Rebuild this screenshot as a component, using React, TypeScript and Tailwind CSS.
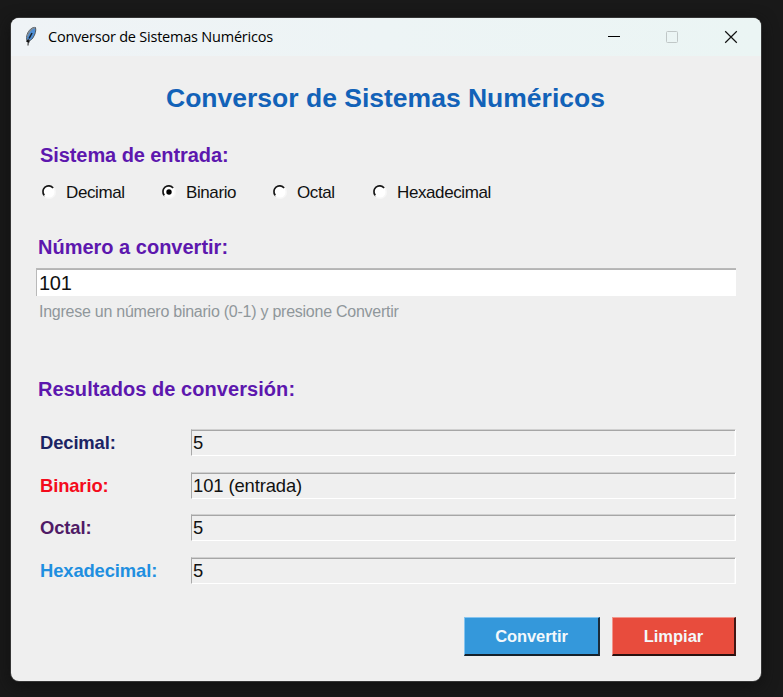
import { useState } from "react";

const systems = [
  { name: "Decimal", slot: "w-[120px]" },
  { name: "Binario", slot: "w-[111px]" },
  { name: "Octal", slot: "w-[100px]" },
  { name: "Hexadecimal", slot: "w-[120px]" },
];

const results = [
  { label: "Decimal:", value: "5", color: "text-[#1b2464]" },
  { label: "Binario:", value: "101 (entrada)", color: "text-[#f40b1c]" },
  { label: "Octal:", value: "5", color: "text-[#4f1b66]" },
  { label: "Hexadecimal:", value: "5", color: "text-[#1f8fe0]" },
];

function Feather() {
  return (
    <svg width="14" height="22" viewBox="0 0 14 22" className="block">
      <path d="M3 14.500C1.800 10.500 3.500 6 6.500 3.200C8.300 1.700 10 1.200 11.500 1.500C12.300 4.500 11.300 8.500 8.800 12C7.300 14 5.500 15.500 3 14.500Z" fill="#4f8fd6" stroke="#50565c" strokeWidth="1" />
      <path d="M11 1.600C7.500 2.600 4.500 6 3.300 10.500" fill="none" stroke="#858b90" strokeWidth="1.200" />
      <path d="M8 7C7.300 8.500 6 10.500 5 12.500" fill="none" stroke="#15212e" strokeWidth="1.500" />
      <path d="M4.500 13L4 19.500" fill="none" stroke="#444" strokeWidth="1.200" />
      <path d="M2.500 14.800L5.500 15.800" stroke="#111" strokeWidth="2" />
    </svg>
  );
}

function Radio({ checked }: { checked: boolean }) {
  return (
    <svg width="16" height="16" viewBox="0 0 16 16" className="-ml-px mr-px block">
      <circle cx="8" cy="8" r="7" fill="#f7f7f7" />
      <circle cx="8" cy="8" r="5.500" fill="#fff" />
      <path d="M3.300 12.500A6.400 6.400 0 0 1 12.700 3.500" fill="none" stroke="#a0a0a0" strokeWidth="1" />
      <path d="M3.300 11.200A5.500 5.500 0 0 1 12 3.900" fill="none" stroke="#161616" strokeWidth="1.600" />
      {checked && <circle cx="8" cy="8" r="2.700" fill="#000" />}
    </svg>
  );
}

function TitleBar() {
  return (
    <header className="flex h-[38px] items-center bg-gradient-to-r from-[#eff3f6] to-[#ebf5f4] pl-[13px]">
      <Feather />
      <span className="ml-[10px] whitespace-nowrap font-['Open_Sans','Noto_Sans',sans-serif] text-[14.5px] leading-5 tracking-[-0.22px] text-black">
        Conversor de Sistemas Numéricos
      </span>
      <div className="ml-auto flex items-center">
        <svg width="160" height="38" viewBox="0 0 160 38" className="block" fill="none">
          <path d="M7 18.500H19" stroke="#000" />
          <rect x="65.500" y="13.500" width="11" height="11" rx="1" stroke="#c0c7c7" />
          <path d="M124.200 13.300L135.800 24.700M135.800 13.300L124.200 24.700" stroke="#111" strokeWidth="1.200" />
        </svg>
      </div>
    </header>
  );
}

export default function App() {
  const [selected, setSelected] = useState("Binario");

  return (
    <div className="h-[697px] w-[783px] overflow-hidden bg-[#191919] pl-[11px] pt-[18px] font-['Liberation_Sans',Arial,sans-serif]">
      <main className="h-[663px] w-[750px] overflow-hidden rounded-[8px] bg-[#efefef] shadow-[0_0_0_1px_#353535,0_4px_16px_#101010]">
        <TitleBar />
        <div className="flex flex-col pl-[25px] pr-[25px]">
          <h1 className="mt-[26px] whitespace-nowrap pr-px text-center text-[26.5px] font-bold leading-[32px] text-[#1262b8]">
            Conversor de Sistemas Numéricos
          </h1>
          <h2 className="mt-[29px] pl-[4px] text-[20px] font-bold leading-6 tracking-[-0.08px] text-[#5d17ae]">Sistema de entrada:</h2>
          <div className="mt-[13px] flex h-6 items-center pl-[6px]">
            {systems.map((s) => (
              <button key={s.name} onClick={() => setSelected(s.name)} className={`flex items-center ${s.slot}`}>
                <Radio checked={selected === s.name} />
                <span className="ml-[8px] whitespace-nowrap pt-px text-[17px] leading-5 tracking-[-0.4px] text-[#111]">{s.name}</span>
              </button>
            ))}
          </div>
          <h2 className="mt-[31px] pl-[2px] text-[20px] font-bold leading-6 text-[#5d17ae]">Número a convertir:</h2>
          <div className="mt-[9px] flex h-[28px] items-center border-l border-t border-[#b9b9b9] bg-white pl-[2px] text-[20px] leading-6 tracking-[-0.3px] text-[#111] shadow-[inset_0_1px_0_#b4b4b4]">
            101
          </div>
          <p className="mt-[6px] whitespace-nowrap pl-[3px] text-[16px] leading-5 tracking-[-0.25px] text-[#8f979b]">
            Ingrese un número binario (0-1) y presione Convertir
          </p>
          <h2 className="mt-[55px] pl-[2px] text-[20px] font-bold leading-6 tracking-[0.06px] text-[#5d17ae]">Resultados de conversión:</h2>
          <div className="mt-[28px] flex flex-col gap-[15.500px]">
            {results.map((r) => (
              <div key={r.label} className="flex h-[27px] items-center">
                <span className={`w-[155px] pl-[4px] pt-px text-[18.4px] font-bold leading-6 tracking-[-0.12px] ${r.color}`}>{r.label}</span>
                <div className="flex h-[27px] flex-1 items-center border border-b-white border-l-[#a8a8a8] border-r-white border-t-[#d0d0d0] pl-px pt-px text-[18.4px] leading-6 tracking-[-0.1px] text-[#111] shadow-[inset_0_1px_0_#a6a6a6,inset_-1px_0_0_#f6f6f6]">
                  {r.value}
                </div>
              </div>
            ))}
          </div>
          <div className="mt-[33.500px] flex justify-end gap-[12px] text-[16.5px] font-bold text-[#f3f8fb]">
            <button className="h-[39px] w-[136px] border border-b-2 border-r-2 border-b-[#15212b] border-l-[#85c4ef] border-r-[#1b2c3a] border-t-[#85c4ef] bg-[#3498db] tracking-[-0.1px]">Convertir</button>
            <button className="h-[39px] w-[124px] border border-b-2 border-r-2 border-b-[#281110] border-l-[#f2968c] border-r-[#401714] border-t-[#f2968c] bg-[#e84c3d]">Limpiar</button>
          </div>
        </div>
      </main>
    </div>
  );
}
